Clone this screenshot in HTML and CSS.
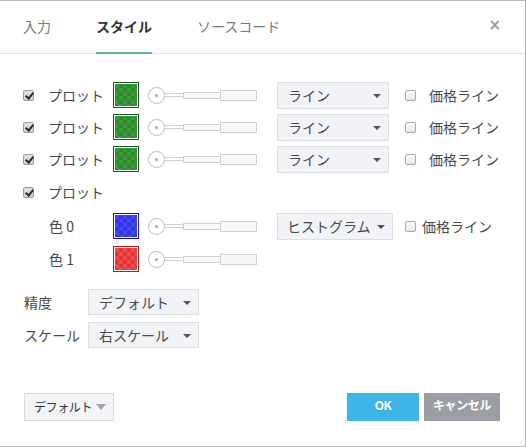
FILE: index.html
```html
<!DOCTYPE html>
<html lang="ja">
<head>
<meta charset="utf-8">
<link rel="stylesheet" href="styles.css">
</head>
<body>
<div class="dialog">
  <div class="header">
    <div class="tab">入力</div>
    <div class="tab active">スタイル</div>
    <div class="tab">ソースコード</div>
    <div class="close">×</div>
  </div>
  <div class="content">
    <div class="row">
      <span class="cb checked"></span><span class="label">プロット</span>
      <span class="swatch green"></span>
      <span class="slider"><span class="knob"></span><span class="seg s1"></span><span class="seg s2"></span><span class="seg s3"></span></span>
      <span class="select sel-line">ライン<span class="arrow"></span></span>
      <span class="cb pcb"></span><span class="plabel">価格ライン</span>
    </div>
    <div class="row">
      <span class="cb checked"></span><span class="label">プロット</span>
      <span class="swatch green"></span>
      <span class="slider"><span class="knob"></span><span class="seg s1"></span><span class="seg s2"></span><span class="seg s3"></span></span>
      <span class="select sel-line">ライン<span class="arrow"></span></span>
      <span class="cb pcb"></span><span class="plabel">価格ライン</span>
    </div>
    <div class="row">
      <span class="cb checked"></span><span class="label">プロット</span>
      <span class="swatch green"></span>
      <span class="slider"><span class="knob"></span><span class="seg s1"></span><span class="seg s2"></span><span class="seg s3"></span></span>
      <span class="select sel-line">ライン<span class="arrow"></span></span>
      <span class="cb pcb"></span><span class="plabel">価格ライン</span>
    </div>
    <div class="row row4">
      <span class="cb checked"></span><span class="label">プロット</span>
    </div>
    <div class="row sub sub0">
      <span class="sublabel">色 0</span>
      <span class="swatch blue"></span>
      <span class="slider"><span class="knob"></span><span class="seg s1"></span><span class="seg s2"></span><span class="seg s3"></span></span>
      <span class="select sel-hist">ヒストグラム<span class="arrow"></span></span>
      <span class="cb pcb2"></span><span class="plabel">価格ライン</span>
    </div>
    <div class="row sub sub1">
      <span class="sublabel">色 1</span>
      <span class="swatch red"></span>
      <span class="slider"><span class="knob"></span><span class="seg s1"></span><span class="seg s2"></span><span class="seg s3"></span></span>
    </div>
    <div class="opt first">
      <span class="optlabel">精度</span>
      <span class="select sel-opt">デフォルト<span class="arrow"></span></span>
    </div>
    <div class="opt">
      <span class="optlabel">スケール</span>
      <span class="select sel-opt">右スケール<span class="arrow"></span></span>
    </div>
  </div>
  <div class="footer">
    <span class="defbtn">デフォルト<span class="arrow grey"></span></span>
    <span class="btn ok">OK</span>
    <span class="btn cancel">キャンセル</span>
  </div>
</div>
</body>
</html>
```

FILE: styles.css
```css
html, body {
  margin: 0;
  padding: 0;
  background: #ffffff;
}
body {
  font-family: "Noto Sans CJK JP", "Noto Sans", "Liberation Sans", sans-serif;
  color: #4a4a4a;
  font-size: 14px;
}
.dialog {
  width: 526px;
  height: 447px;
  box-sizing: border-box;
  border: 1px solid #b9b9b9;
  border-left: none;
  background: #fff;
  display: flex;
  flex-direction: column;
}
.header {
  height: 52px;
  border-bottom: 1px solid #e3e3e3;
  display: flex;
  align-items: stretch;
  padding-left: 23px;
  flex-shrink: 0;
}
.tab {
  display: flex;
  align-items: center;
  font-size: 14px;
  color: #7a7a7a;
  border-bottom: 2px solid transparent;
  margin-bottom: -1px;
  margin-right: 45px;
  padding-bottom: 2px;
  line-height: 18px;
}
.tab.active {
  color: #333;
  font-weight: bold;
  border-bottom-color: #5cb98a;
}
.close {
  margin-left: auto;
  margin-right: 24px;
  display: flex;
  align-items: center;
  padding-bottom: 4px;
  font-size: 15px;
  font-weight: bold;
  color: #9a9a9a;
  font-family: "DejaVu Sans", sans-serif;
}
.content {
  padding: 27px 0 0 23px;
  display: flex;
  flex-direction: column;
}
.row {
  display: flex;
  align-items: center;
  height: 28px;
  margin-bottom: 4px;
}
.row4 { margin-top: 1px; }
.sub0 { margin-top: 2px; }
.sub1 { margin-top: 1px; }
.sub { padding-left: 26px; }
.cb {
  width: 11px;
  height: 11px;
  box-sizing: border-box;
  border: 1px solid #a9a9a9;
  border-radius: 2px;
  background: linear-gradient(#fbfbfb, #e9e9e9);
  flex-shrink: 0;
  position: relative;
}
.cb.checked {
  background: linear-gradient(#e2e2e2, #cfcfcf);
  border-color: #9a9a9a;
}
.cb.checked::after {
  content: "";
  position: absolute;
  left: 3px;
  top: 0px;
  width: 3px;
  height: 6px;
  border: solid #2a2a2a;
  border-width: 0 2px 2px 0;
  transform: rotate(40deg);
}
.label {
  margin-left: 14px;
  width: 65px;
  line-height: 18px;
}
.sublabel {
  width: 64px;
  line-height: 18px;
}
.swatch {
  width: 26px;
  height: 26px;
  box-sizing: border-box;
  border: 1px solid;
  flex-shrink: 0;
  position: relative;
  background: #fff;
}
.swatch::after {
  content: "";
  position: absolute;
  inset: 1px;
  background-size: 8px 8px;
}
.green { border-color: #1c5a1c; }
.green::after {
  background-color: #3a983a;
  background-image: conic-gradient(#2f8b2f 25%, transparent 0 50%, #2f8b2f 0 75%, transparent 0);
}
.blue { border-color: #1414c8; }
.blue::after {
  background-color: #4646f6;
  background-image: conic-gradient(#3434e4 25%, transparent 0 50%, #3434e4 0 75%, transparent 0);
}
.red { border-color: #c01818; }
.red::after {
  background-color: #f24a4a;
  background-image: conic-gradient(#e23838 25%, transparent 0 50%, #e23838 0 75%, transparent 0);
}
.slider {
  display: flex;
  align-items: center;
  margin-left: 9px;
  width: 110px;
  flex-shrink: 0;
}
.knob {
  width: 17px;
  height: 17px;
  box-sizing: border-box;
  border: 1px solid #bcbcc4;
  border-radius: 50%;
  background: #fff;
  position: relative;
  flex-shrink: 0;
  z-index: 1;
}
.knob::after {
  content: "";
  position: absolute;
  left: 6px;
  top: 6px;
  width: 3px;
  height: 3px;
  border-radius: 50%;
  background: #a8a8b0;
}
.seg {
  box-sizing: border-box;
  border: 1px solid #d0d0d4;
  background: #f8f8f8;
  margin-left: -1px;
  flex-shrink: 0;
}
.s1 { width: 20px; height: 4px; background: #fff; }
.s2 { width: 38px; height: 7px; }
.s3 { width: 37px; height: 11px; }
.select {
  display: flex;
  align-items: center;
  box-sizing: border-box;
  height: 27px;
  border: 1px solid #dcdee3;
  background: #f1f3f7;
  line-height: 18px;
  padding-left: 10px;
  position: relative;
  flex-shrink: 0;
}
.sel-line { margin-left: 19px; width: 112px; }
.sel-hist { margin-left: 19px; width: 116px; padding-left: 9px; }
.sel-opt { width: 111px; height: 26px; padding-left: 10px; }
.arrow {
  position: absolute;
  right: 7px;
  top: 11px;
  width: 0;
  height: 0;
  border-left: 4px solid transparent;
  border-right: 4px solid transparent;
  border-top: 4px solid #555;
}
.arrow.grey {
  border-left-width: 5px;
  border-right-width: 5px;
  border-top: 6px solid #a4a4a4;
  right: 7px;
  top: 10px;
}
.pcb { margin-left: 16px; }
.pcb2 { margin-left: 12px; margin-right: -7px; }
.plabel {
  margin-left: 13px;
  line-height: 18px;
}
.opt {
  display: flex;
  align-items: center;
  height: 26px;
  margin-bottom: 7px;
  padding-left: 1px;
}
.opt.first { margin-top: 12px; }
.optlabel {
  width: 64px;
  line-height: 18px;
}
.footer {
  margin-top: auto;
  display: flex;
  align-items: center;
  padding: 0 25px 25px 24px;
}
.defbtn {
  position: relative;
  box-sizing: border-box;
  width: 90px;
  height: 28px;
  border: 1px solid #d8dade;
  background: #f3f4f7;
  display: flex;
  align-items: center;
  padding-left: 9px;
  font-size: 12px;
  letter-spacing: -0.4px;
  color: #333;
  line-height: 18px;
}
.btn {
  height: 28px;
  display: flex;
  align-items: center;
  justify-content: center;
  color: #fff;
  font-weight: bold;
  font-size: 12px;
  letter-spacing: -0.4px;
  line-height: 18px;
  padding-bottom: 4px;
  box-sizing: border-box;
}
.ok {
  margin-left: auto;
  width: 72px;
  background: #3db5e6;
}
.cancel {
  margin-left: 5px;
  width: 76px;
  background: #9c9ea5;
}
```
